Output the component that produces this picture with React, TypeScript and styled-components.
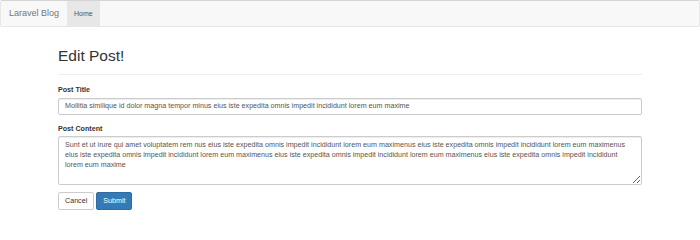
import React from 'react';
import styled, { createGlobalStyle } from 'styled-components';

const GlobalStyle = createGlobalStyle`
  html, body {
    margin: 0;
    padding: 0;
    background: #fff;
  }
  body {
    font-family: "Liberation Sans", Arial, Helvetica, sans-serif;
    font-size: 7.15px;
    line-height: 1.42857;
    color: #333;
  }
  * {
    box-sizing: border-box;
  }
`;

const titleText =
  'Mollitia similique id dolor magna tempor minus eius iste expedita omnis impedit incididunt lorem eum maxime';

const contentText =
  'Sunt et ut irure qui amet voluptatem rem nus eius iste expedita omnis impedit incididunt lorem eum maximenus eius iste expedita omnis impedit incididunt lorem eum maximenus eius iste expedita omnis impedit incididunt lorem eum maximenus eius iste expedita omnis impedit incididunt lorem eum maximenus eius iste expedita omnis impedit incididunt lorem eum maxime';

export default function App() {
  return (
    <>
      <GlobalStyle />
      <Navbar>
        <Brand href="#">Laravel Blog</Brand>
        <NavList>
          <NavItem active>
            <NavLink href="#">Home</NavLink>
          </NavItem>
        </NavList>
      </Navbar>

      <Container>
        <PageHeader>Edit Post!</PageHeader>

        <form onSubmit={e => e.preventDefault()}>
          <FormGroup>
            <Label htmlFor="title">Post Title</Label>
            <TextInput id="title" type="text" defaultValue={titleText} />
          </FormGroup>

          <FormGroup>
            <Label htmlFor="content">Post Content</Label>
            <TextArea id="content" defaultValue={contentText} />
          </FormGroup>

          <ButtonRow>
            <Button type="button">Cancel</Button>
            <Button type="submit" primary>
              Submit
            </Button>
          </ButtonRow>
        </form>
      </Container>
    </>
  );
}

const Navbar = styled.nav`
  display: flex;
  align-items: stretch;
  height: 27px;
  background: #f8f8f8;
  border: 1px solid #e7e7e7;
  border-top-color: #d4d4d4;
  border-radius: 2px;
`;

const Brand = styled.a`
  display: flex;
  align-items: center;
  padding: 0 7.5px 0 8px;
  font-size: 9px;
  color: #777;
  text-decoration: none;
`;

const NavList = styled.ul`
  display: flex;
  margin: 0;
  padding: 0;
  list-style: none;
`;

const NavItem = styled.li<{ active?: boolean }>`
  display: flex;
  background: ${props => (props.active ? '#e7e7e7' : 'transparent')};
`;

const NavLink = styled.a`
  display: flex;
  align-items: center;
  padding: 0 7.5px;
  font-size: 7px;
  color: #555;
  text-decoration: none;
`;

const Container = styled.div`
  width: 584px;
  margin: 0 auto;
`;

const PageHeader = styled.h1`
  margin: 20px 0 10px;
  padding-bottom: 10px;
  border-bottom: 1px solid #eee;
  font-size: 15.5px;
  font-weight: 500;
  line-height: 17px;
  color: #333;
`;

const FormGroup = styled.div`
  margin-bottom: 9px;
`;

const Label = styled.label`
  display: block;
  margin-bottom: 2.5px;
  font-size: 7.15px;
  font-weight: bold;
  line-height: 10px;
  color: #333;
`;

const fieldBase = `
  display: block;
  width: 100%;
  padding: 3px 6px;
  font-family: "Liberation Sans", Arial, Helvetica, sans-serif;
  font-size: 7.15px;
  line-height: 10px;
  color: #555;
  background: #fff;
  border: 1px solid #ccc;
  border-radius: 2px;
  box-shadow: inset 0 1px 1px rgba(0, 0, 0, 0.075);
  outline: none;
`;

const TextInput = styled.input`
  ${fieldBase}
  height: 17px;
`;

const TextArea = styled.textarea`
  ${fieldBase}
  height: 49px;
  resize: vertical;
  overflow: hidden;
`;

const ButtonRow = styled.div`
  display: flex;
  gap: 2px;
  margin-top: -2px;
`;

const Button = styled.button<{ primary?: boolean }>`
  height: 18px;
  padding: 0 6px;
  font-family: "Liberation Sans", Arial, Helvetica, sans-serif;
  font-size: 7.15px;
  line-height: 10px;
  color: ${props => (props.primary ? '#fff' : '#333')};
  background: ${props => (props.primary ? '#337ab7' : '#fff')};
  border: 1px solid ${props => (props.primary ? '#2e6da4' : '#ccc')};
  border-radius: 2px;
  cursor: pointer;
`;
